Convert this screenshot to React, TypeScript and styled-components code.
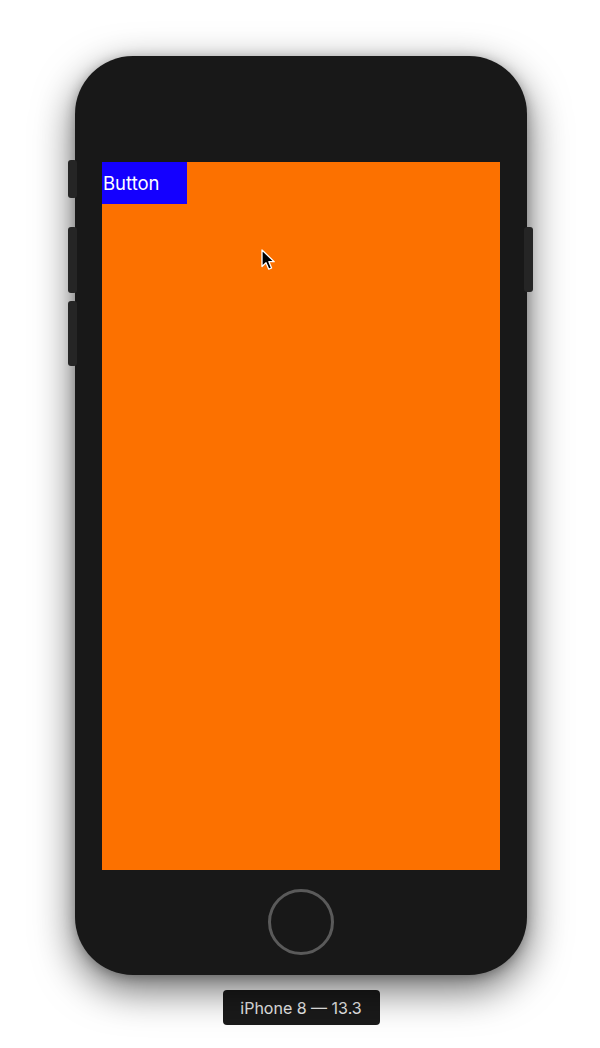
import styled, { createGlobalStyle } from "styled-components";

const GlobalStyle = createGlobalStyle`
  html, body {
    margin: 0;
    padding: 0;
    background: #ffffff;
  }
`;

const Page = styled.div`
  width: 600px;
  height: 1048px;
  display: flex;
  flex-direction: column;
  align-items: center;
  padding-top: 56px;
  box-sizing: border-box;
  font-family: Inter, "Liberation Sans", sans-serif;
`;

const Phone = styled.div`
  position: relative;
  width: 452px;
  height: 919px;
  margin-left: 2px;
  background: #181818;
  border-radius: 58px;
  box-shadow: 0 14px 40px rgba(0, 0, 0, 0.6), 0 2px 12px rgba(0, 0, 0, 0.25);
  display: flex;
  flex-direction: column;
  align-items: center;
  padding-top: 106px;
  box-sizing: border-box;
`;

// hardware keys sticking out of the case edge
const SideKey = styled.div<{ $side: "left" | "right"; $top: number; $h: number }>`
  position: absolute;
  top: ${(p) => p.$top}px;
  ${(p) => (p.$side === "left" ? "left: -7px;" : "right: -6px;")}
  width: 9px;
  height: ${(p) => p.$h}px;
  background: #252525;
  border-radius: 3px;
`;

const Screen = styled.div`
  position: relative;
  width: 398px;
  height: 708px;
  background: #fc7100;
  display: flex;
  align-items: flex-start;
`;

const Button = styled.button`
  width: 85px;
  height: 42px;
  border: none;
  margin: 0;
  padding: 0 0 0 1px;
  background: #1400ff;
  color: #ffffff;
  font-family: Inter, "Liberation Sans", sans-serif;
  font-size: 18.5px;
  text-align: left;
  cursor: pointer;
`;

const Cursor = styled.svg`
  position: absolute;
  left: 159px;
  top: 87px;
`;

const HomeButton = styled.div`
  width: 60px;
  height: 60px;
  margin-top: 19px;
  border: 3px solid #5a5a5a;
  border-radius: 50%;
`;

const Label = styled.div`
  margin-top: 15px;
  margin-left: 2px;
  width: 157px;
  height: 35px;
  background: #1a1a1a;
  border-radius: 4px;
  color: #ececec;
  font-size: 16px;
  display: flex;
  align-items: center;
  justify-content: center;
`;

export default function App() {
  return (
    <Page>
      <GlobalStyle />
      <Phone>
        <SideKey $side="left" $top={104} $h={38} />
        <SideKey $side="left" $top={171} $h={66} />
        <SideKey $side="left" $top={245} $h={65} />
        <SideKey $side="right" $top={171} $h={65} />
        <Screen>
          <Button>Button</Button>
          <Cursor width="16" height="24" viewBox="0 0 16 24">
            <path
              d="M1 1 L1 17.5 L5 13.8 L7.8 20.2 L10.6 19 L7.9 12.7 L13.2 12.7 Z"
              fill="#000"
              stroke="#fff"
              strokeWidth="1.3"
              strokeLinejoin="round"
            />
          </Cursor>
        </Screen>
        <HomeButton />
      </Phone>
      <Label>iPhone 8 — 13.3</Label>
    </Page>
  );
}
